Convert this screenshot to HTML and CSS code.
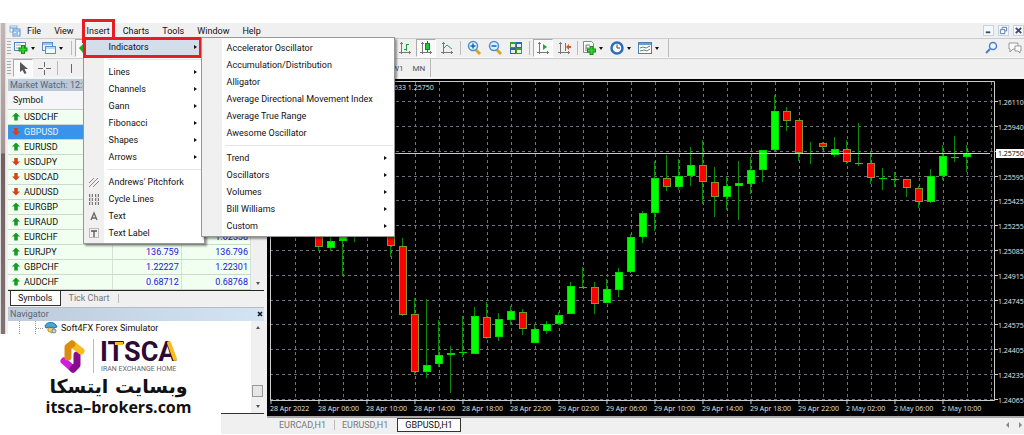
FILE: index.html
```html
<!DOCTYPE html>
<html lang="en">
<head>
<meta charset="utf-8">
<title>GBPUSD,H1</title>
<link rel="stylesheet" href="styles.css">
</head>
<body>
<div class="app">
  <div class="edge"></div>
  <div class="frame">
    <nav class="menubar">
      <svg class="app-icon" viewBox="0 0 12 12"><rect x="1" y="1" width="7" height="6" fill="#fff" stroke="#8db4d8"/><rect x="4" y="4" width="7" height="7" fill="#e3f0fb" stroke="#5b93c7"/><path d="M1 3h7M4 6h7M6 10V8M8 10V7" stroke="#5b93c7"/></svg>
      <button>File</button><button>View</button>
      <div class="menu-anchor">
        <button class="marked">Insert</button>
        <div class="menu menu-insert">
          <button class="item open marked">Indicators</button>
          <hr>
          <button class="item sub">Lines</button>
          <button class="item sub">Channels</button>
          <button class="item sub">Gann</button>
          <button class="item sub">Fibonacci</button>
          <button class="item sub">Shapes</button>
          <button class="item sub">Arrows</button>
          <hr>
          <button class="item"><svg viewBox="0 0 12 12"><path d="M1 7l5-5M1 11L10 2M5 11l6-6" stroke="#888" fill="none"/></svg>Andrews' Pitchfork</button>
          <button class="item"><svg viewBox="0 0 12 12"><path d="M1.500 1v11M4.500 1v11M7.500 1v11M10.500 1v11" stroke="#777" stroke-dasharray="3 1"/><path d="M3 1v11M9 1v11" stroke="#bbb"/></svg>Cycle Lines</button>
          <button class="item"><svg viewBox="0 0 12 12"><path d="M3 10L6 3l3 7M4 8h4" stroke="#666" stroke-width="1.300" fill="none"/></svg>Text</button>
          <button class="item"><svg viewBox="0 0 12 12"><rect x="1.500" y="1.500" width="9" height="9" fill="none" stroke="#888" stroke-dasharray="1 1"/><path d="M3 4h6M6 4v6" stroke="#555" stroke-width="1.300"/></svg>Text Label</button>
        </div>
        <div class="menu menu-indicators">
          <button class="item">Accelerator Oscillator</button>
          <button class="item">Accumulation/Distribution</button>
          <button class="item">Alligator</button>
          <button class="item">Average Directional Movement Index</button>
          <button class="item">Average True Range</button>
          <button class="item">Awesome Oscillator</button>
          <hr>
          <button class="item sub">Trend</button>
          <button class="item sub">Oscillators</button>
          <button class="item sub">Volumes</button>
          <button class="item sub">Bill Williams</button>
          <button class="item sub">Custom</button>
        </div>
      </div>
      <button>Charts</button><button>Tools</button><button>Window</button><button>Help</button>
      <div class="window-buttons">
        <button aria-label="Minimize"><svg viewBox="0 0 10 10"><path d="M2 7h5" stroke="#446" stroke-width="2"/></svg></button>
        <button aria-label="Restore"><svg viewBox="0 0 10 10"><path d="M3.500 3V1.500h5v4H7M1.500 4h5v4.500h-5z" fill="none" stroke="#56729a"/></svg></button>
        <button aria-label="Close"><svg viewBox="0 0 10 10"><path d="M2 2l6 6M8 2L2 8" stroke="#446" stroke-width="2"/></svg></button>
      </div>
    </nav>

    <div class="toolbar">
      <div class="group group-left">
        <i class="grip"></i>
        <button class="tool drop" aria-label="New chart"><svg viewBox="0 0 16 16"><rect x="1.500" y="2.500" width="11" height="8" fill="#fff" stroke="#4e86b8"/><path d="M3 5h5M3 8h4" stroke="#7b9"/><path d="M10 5v9M5.500 9.500h9" stroke="#178a17" stroke-width="4"/><path d="M10 6v7M6.500 9.500h7" stroke="#2fd32f" stroke-width="2"/></svg></button>
        <button class="tool drop" aria-label="Profiles"><svg viewBox="0 0 16 16"><rect x="1.500" y="2.500" width="10" height="8" fill="#e9f3fc" stroke="#5b8fc4"/><path d="M2 4h9" stroke="#5b8fc4"/><rect x="4.500" y="6.500" width="10" height="7" fill="#f4f9ff" stroke="#5b8fc4"/><path d="M5 8h9" stroke="#8db4dc"/></svg></button>
        <i class="sep"></i>
        <button class="tool pressed" aria-label="Market Watch"><svg viewBox="0 0 16 16"><path d="M2 8l4-4v3h4v3H6v3z" fill="#2a2"/></svg></button>
      </div>
      <div class="group group-right">
        <button class="tool" aria-label="Bar chart"><svg viewBox="0 0 16 16"><path d="M4.500 2v12M2 12.500h12" stroke="#777" fill="none"/><path d="M3 3.500h3M12.500 11v3" stroke="#777"/><path d="M9.500 4v7M7 9.500h3M9 4.500h3" stroke="#2a9a3a"/></svg></button>
        <button class="tool pressed" aria-label="Candlesticks"><svg viewBox="0 0 16 16"><path d="M4.500 2v12M2 12.500h12M3 3.500h3M12.500 11v3" stroke="#777"/><path d="M9.500 1v11" stroke="#084"/><rect x="7.500" y="3.500" width="4" height="6" fill="#1fc43a" stroke="#0a8a20"/></svg></button>
        <button class="tool" aria-label="Line chart"><svg viewBox="0 0 16 16"><path d="M4.500 2v12M2 12.500h12M3 3.500h3M12.500 11v3" stroke="#777"/><path d="M4 9l4-4 5 4" stroke="#3a9a4a" fill="none"/></svg></button>
        <i class="sep"></i>
        <button class="tool" aria-label="Zoom in"><svg viewBox="0 0 16 16"><path d="M10 10l4 4" stroke="#d9a520" stroke-width="3"/><circle cx="7" cy="6" r="4.500" fill="#dff0ff" stroke="#4a90d0" stroke-width="1.500"/><path d="M4.500 6h5M7 3.500v5" stroke="#1d5fae" stroke-width="1.500"/></svg></button>
        <button class="tool" aria-label="Zoom out"><svg viewBox="0 0 16 16"><path d="M10 10l4 4" stroke="#d9a520" stroke-width="3"/><circle cx="7" cy="6" r="4.500" fill="#dff0ff" stroke="#4a90d0" stroke-width="1.500"/><path d="M4.500 6h5" stroke="#1d5fae" stroke-width="1.500"/></svg></button>
        <button class="tool" aria-label="Tile windows"><svg viewBox="0 0 16 16"><path d="M2 2h6v6H2zM8 8h6v6H8z" fill="#3f9a2c"/><path d="M8 2h6v6H8zM2 8h6v6H2z" fill="#2c64b4"/><path d="M3 4h4v3H3zM9 4h4v3H9zM3 10h4v3H3zM9 10h4v3H9z" fill="#e5f3e5"/></svg></button>
        <i class="sep"></i>
        <button class="tool pressed" aria-label="Auto scroll"><svg viewBox="0 0 16 16"><path d="M4.500 2v12M2 12.500h12M3 3.500h3M12.500 11v3" stroke="#777"/><path d="M8 4l4 3-4 3z" fill="#1fa93a"/></svg></button>
        <button class="tool" aria-label="Chart shift"><svg viewBox="0 0 16 16"><path d="M4.500 2v12M2 12.500h12M3 3.500h3M12.500 11v3" stroke="#777"/><path d="M9.500 3v8" stroke="#4a7ab0"/><path d="M10 7l3-3v2h2v2h-2v2z" fill="#d9532c"/></svg></button>
        <i class="sep"></i>
        <button class="tool drop" aria-label="Indicators"><svg viewBox="0 0 16 16"><path d="M2.500 1.500h8l2 2v9h-10z" fill="#fff" stroke="#888"/><path d="M5 11V5h4M5 8h3" stroke="#777" fill="none"/><path d="M10.500 6v9M6 10.500h9" stroke="#178a17" stroke-width="4"/><path d="M10.500 7v7M7 10.500h7" stroke="#2fd32f" stroke-width="2"/></svg></button>
        <button class="tool drop" aria-label="Periods"><svg viewBox="0 0 16 16"><circle cx="8" cy="8" r="5.500" fill="#f4f9ff" stroke="#2d6db8" stroke-width="2.500"/><path d="M8 4.500V8h3" stroke="#444" fill="none"/></svg></button>
        <button class="tool drop" aria-label="Templates"><svg viewBox="0 0 16 16"><rect x="1.500" y="2.500" width="13" height="11" fill="#fff" stroke="#4d7fb3"/><path d="M2 4h12" stroke="#6b9bd0" stroke-width="2"/><path d="M3 8l3-1 3 1 4-2M3 11l4-1 3 1 3-2" stroke="#5a8a6a" fill="none"/></svg></button>
      </div>
      <div class="search-tools">
        <button class="tool" aria-label="Search"><svg viewBox="0 0 16 16"><circle cx="9" cy="6" r="3.500" fill="#eef6ff" stroke="#4a80c8" stroke-width="1.500"/><path d="M6 9l-4 4" stroke="#4a80c8" stroke-width="2"/></svg></button>
        <button class="tool" aria-label="Chat"><svg viewBox="0 0 16 16"><path d="M3 3h9v6H7l-3 3V9H3z" fill="#f8f8f8" stroke="#999"/><path d="M9 6h6v5h-1v2l-2-2H9z" fill="#fff" stroke="#999"/></svg></button>
      </div>
    </div>

    <div class="toolbar">
      <div class="group group-left">
        <i class="grip"></i>
        <button class="tool pressed" aria-label="Cursor"><svg viewBox="0 0 16 16"><path d="M5 2v10l2.500-2 2 4 2-1-2-4H13z" fill="#555"/></svg></button>
        <button class="tool" aria-label="Crosshair"><svg viewBox="0 0 16 16"><path d="M8.500 2v5M8.500 10v5M2 8.500h5M10 8.500h5" stroke="#666"/></svg></button>
        <i class="sep"></i>
        <button class="tool" aria-label="Vertical line"><svg viewBox="0 0 16 16"><path d="M8.500 4v9" stroke="#666"/></svg></button>
      </div>
      <div class="group group-periods"><button>W1</button><button>MN</button></div>
    </div>

    <div class="workspace">
      <aside class="side">
        <section class="watch">
          <h2 class="panel-title">Market Watch: 12:3</h2>
          <div class="watch-body">
            <table>
              <thead><tr><th>Symbol</th><th></th><th></th></tr></thead>
              <tbody>
                <tr class="up"><td>USDCHF</td><td></td><td></td></tr>
                <tr class="down selected"><td>GBPUSD</td><td></td><td></td></tr>
                <tr class="up"><td>EURUSD</td><td></td><td></td></tr>
                <tr class="down"><td>USDJPY</td><td></td><td></td></tr>
                <tr class="down"><td>USDCAD</td><td></td><td></td></tr>
                <tr class="down"><td>AUDUSD</td><td></td><td></td></tr>
                <tr class="up"><td>EURGBP</td><td></td><td></td></tr>
                <tr class="up"><td>EURAUD</td><td></td><td></td></tr>
                <tr class="up"><td>EURCHF</td><td></td><td>1.02558</td></tr>
                <tr class="up"><td>EURJPY</td><td>136.759</td><td>136.796</td></tr>
                <tr class="up"><td>GBPCHF</td><td>1.22227</td><td>1.22301</td></tr>
                <tr class="up"><td>AUDCHF</td><td>0.68712</td><td>0.68768</td></tr>
              </tbody>
            </table>
            <div class="scroll"><i class="arrow up-arrow"></i><i class="arrow down-arrow"></i></div>
          </div>
          <div class="panel-tabs"><button class="active">Symbols</button><button>Tick Chart</button><i class="sep"></i></div>
        </section>
        <section class="navigator">
          <h2 class="panel-title nav-title">Navigator<button class="close" aria-label="Close"><svg viewBox="0 0 8 8"><path d="M2 2l4 4M6 2L2 6" stroke="#111" stroke-width="1.500"/></svg></button></h2>
          <div class="nav-body">
            <div class="tree">
              <svg class="branch" viewBox="0 0 36 14"><path d="M11.500 0v14M27.500 0v14M28 7.500h8" stroke="#999" stroke-dasharray="1 1" fill="none"/></svg>
              <svg class="leaf" viewBox="0 0 14 14"><path d="M4 7l5-1 2 3-3 3-4-2z" fill="#f2cf63" stroke="#b9962d"/><path d="M1 5c1-4 8-5 11-1l1 2-4 1-4-1-3 1z" fill="#4aa5dc" stroke="#2573aa"/><circle cx="10" cy="10" r="2" fill="#c9d7dd" stroke="#6b8794"/></svg>
              <span>Soft4FX Forex Simulator</span>
            </div>
            <div class="scroll"><i class="arrow up-arrow"></i><i class="thumb"></i><i class="arrow down-arrow"></i></div>
          </div>
        </section>
      </aside>

      <main class="chart-area">
        <svg id="chart" class="chart" viewBox="267 79 757 337" role="img" aria-label="GBPUSD hourly candles"></svg>
        <div class="chart-tabs">
          <button>EURCAD,H1</button><i class="sep"></i><button>EURUSD,H1</button><button class="active">GBPUSD,H1</button>
          <div class="tab-arrows"><i></i><i class="right"></i></div>
        </div>
      </main>
    </div>
  </div>

  <div class="banner">
    <svg class="logo" viewBox="0 0 124 36">
      <g fill="none" stroke-width="7" stroke-linecap="round" stroke-linejoin="round">
        <path d="M16 31L7 23" stroke="#d01bd8"/><path d="M20 17v10l-4 4" stroke="#870b8c"/>
        <path d="M15 6l9 7" stroke="#f6bd1c"/><path d="M11 19V9l4-3" stroke="#d98c10"/>
      </g>
      <path d="M36.500 1v34" stroke="#bbb"/>
      <text class="wordmark" x="43" y="23">ITSCA</text>
      <path d="M58 5.500h8" stroke="#f6bd1c" stroke-width="3"/>
      <path d="M112 5l6 16" stroke="#f6bd1c" stroke-width="4" stroke-linecap="round"/>
      <text class="tagline" x="44" y="33">IRAN EXCHANGE HOME</text>
    </svg>
    <div class="persian" lang="fa" dir="rtl">وبسایت ایتسکا</div>
    <div class="site">itsca–brokers.com</div>
  </div>
</div>
<script src="chart.js"></script>
</body>
</html>
```

FILE: styles.css
```css
* { box-sizing: border-box; }
body { margin: 0; padding-top: 23px; background: #fff; font-family: Roboto, "Noto Sans", sans-serif; font-size: 9px; color: #111; overflow: hidden; }
button { font: inherit; color: inherit; background: none; border: 0; padding: 0; margin: 0; white-space: nowrap; }
svg { display: block; flex: none; }
.app { position: relative; display: flex; background: #f0f0f0; }
.edge { flex: 0 0 6px; background: linear-gradient(#c4b4b4, #a59494 130px, #716060 131px, #8d7c7c); border-left: 1px solid #ddd; border-right: 1px solid #ddd; }
.frame { flex: 1; min-width: 0; }

.menubar { display: flex; align-items: center; height: 15px; padding-left: 3px; gap: 13px; line-height: 14px; }
.app-icon { width: 12px; height: 12px; margin-right: -7px; }
.menu-anchor { position: relative; }
.menu-anchor > .marked { outline: 3px solid #e81c24; outline-offset: 2px; }
.window-buttons { margin-left: auto; display: flex; gap: 4px; }
.window-buttons button { width: 11px; height: 11px; border: 1px solid #c3d3e6; background: #f5f9fd; }
.window-buttons svg { width: 9px; height: 9px; }

.menu { position: absolute; z-index: 5; background: linear-gradient(90deg, #f0f0f0 20px, #fff 20px); border: 1px solid #979797; box-shadow: 2px 2px 2px #0006; padding: 1px; }
.menu-insert { left: -4px; top: 14px; width: 122px; padding-top: 0; }
.menu-indicators { z-index: 6; left: 114px; top: 13px; width: 194px; padding-top: 2px; }
.item { position: relative; display: flex; align-items: center; width: 100%; height: 17px; padding-left: 24px; }
.item > svg { position: absolute; left: 3px; width: 12px; height: 12px; }
.menu hr { height: 1px; margin: 3px 0 4px 22px; border: 0; background: #e4e4e4; }
.item.sub::after, .item.open::after { content: ""; position: absolute; right: 6px; border: 2px solid transparent; border-left: 3px solid #111; border-right: 0; }
.item.open { width: 115px; background: #d3deea; outline: 3px solid #e81c24; outline-offset: -1px; }
.item.open::after { right: 3px; }

.toolbar { display: flex; height: 20px; border-top: 1px solid #ccc; border-bottom: 1px solid #f8f8f8; }
.group { display: flex; align-items: center; gap: 1px; }
.group-left { flex: 0 0 389px; overflow: hidden; }
.group-right { border-right: 1px solid #bbb; padding-right: 4px; }
.grip { flex: none; width: 4px; height: 14px; margin: 0 1px; background: repeating-linear-gradient(#aaa 0 1px, #f0f0f0 1px 3px); }
.tool { flex: none; display: flex; align-items: center; justify-content: center; width: 20px; height: 18px; }
.tool svg { width: 16px; height: 16px; }
.tool.pressed { background: #f9f9f9; border: 1px solid #fff; border-top-color: #aaa; border-left-color: #aaa; }
.tool.drop { justify-content: flex-start; width: 27px; gap: 2px; }
.tool.drop::after { content: ""; border: 2px solid transparent; border-top: 3px solid #111; border-bottom: 0; }
.sep { flex: none; width: 1px; height: 14px; margin: 0 2px; background: #bbb; }
.search-tools { display: flex; margin-left: auto; gap: 2px; }
.group-periods { gap: 9px; margin-left: -3px; padding-right: 5px; color: #555; font-size: 8px; border-right: 1px solid #bbb; }

.workspace { display: flex; margin-top: 1px; }
.side { flex: 0 0 261px; display: flex; flex-direction: column; padding: 0 3px 0 2px; }
.panel-title { display: flex; align-items: center; height: 12px; margin: 0; padding-left: 2px; font-size: 9px; font-weight: 400; color: #596574; background: #bac8d8; }
.watch-body { display: flex; background: #f0f0f0; border-bottom: 1px solid #222; }
table { flex: 1; border-collapse: collapse; table-layout: fixed; width: 100%; }
th { height: 18px; padding: 0 0 0 5px; text-align: left; font-weight: 400; background: #f6f6f8; border-bottom: 1px solid #ccc; }
th:first-child { width: 104px; }
td { height: 15px; padding: 0 2px 0 0; line-height: 14px; text-align: right; color: #1818d8; background: #f0fff0; border-bottom: 1px solid #cbd8cb; border-right: 1px solid #d5e2d5; }
td:first-child { padding-left: 15px; text-align: left; color: #111; }
.up td:first-child::before, .down td:first-child::before { content: ""; display: inline-block; width: 8px; height: 8px; margin: 0 4px 0 -11px; vertical-align: -1px; background: #159a25; clip-path: polygon(50% 0, 100% 50%, 72% 50%, 72% 100%, 28% 100%, 28% 50%, 0 50%); }
.down td:first-child::before { background: #d3441b; clip-path: polygon(28% 0, 72% 0, 72% 50%, 100% 50%, 50% 100%, 0 50%, 28% 50%); }
.selected td, .selected td:first-child { background: #3993ea; color: #e8f3ff; }
.scroll { flex: 0 0 13px; display: flex; flex-direction: column; align-items: center; padding: 5px 0; background: #f0f0f0; }
.arrow { border: 2px solid transparent; }
.up-arrow { border-bottom: 3px solid #555; border-top: 0; margin-bottom: auto; }
.down-arrow { border-top: 3px solid #555; border-bottom: 0; }
.thumb { width: 11px; height: 12px; margin-bottom: 8px; background: #e6e6e6; border: 1px solid #999; }
.panel-tabs { display: flex; align-items: center; height: 16px; padding: 0 2px 1px; gap: 8px; color: #777; }
.panel-tabs .sep { height: 9px; margin: 0; }
.panel-tabs .active { height: 15px; padding: 0 7px; color: #111; background: #fff; border: 1px solid #333; border-top: 0; }
.navigator { flex: 1; display: flex; flex-direction: column; border-top: 1px solid #bbb; padding-bottom: 20px; }
.nav-title { height: 13px; background: linear-gradient(90deg, #bccbdc, #d3e4f5); }
.close { margin-left: auto; }
.close svg { width: 8px; height: 8px; }
.nav-body { flex: 1; display: flex; background: #fff; border-bottom: 1px solid #333; }
.tree { flex: 1; display: flex; align-items: center; height: 14px; }
.branch { width: 36px; height: 14px; }
.leaf { width: 14px; height: 14px; margin-right: 3px; }

.chart-area { flex: 1; min-width: 0; }
.chart { width: 100%; height: auto; background: #000; font-family: "Open Sans", sans-serif; font-size: 7px; }
.chart text { fill: #e4e4e4; }
.chart .price-now { fill: #000; }
.grid { stroke: #70747a; stroke-dasharray: 3 3; fill: none; }
.axis { stroke: #ccc; fill: none; }
.wick { stroke: #0a8a0a; }
.bull { fill: #00ff00; stroke: #00d800; }
.bear { fill: #ff0000; stroke: #7c9a24; }
.chart-tabs { display: flex; align-items: center; height: 18px; padding: 0 2px 2px 12px; border-top: 2px solid #aaa; color: #777; }
.chart-tabs .sep { height: 10px; margin: 0 7px 0 8px; }
.chart-tabs .active { height: 14px; margin-left: 9px; padding: 0 7px; background: #fff; color: #111; border: 1px solid #333; }
.tab-arrows { display: flex; gap: 10px; margin-left: auto; }
.tab-arrows i { border: 3px solid transparent; border-right-color: #888; border-left: 0; }
.tab-arrows .right { border-left: 3px solid #888; border-right: 0; }

.banner { position: absolute; z-index: 8; left: 0; bottom: 0; width: 221px; height: 100px; padding: 4px 16px 0 0; background: #fff; display: flex; flex-direction: column; align-items: center; color: #111; }
.logo { width: 124px; height: 36px; margin-left: 32px; overflow: visible; }
.wordmark { font: 700 27px Roboto, sans-serif; fill: #2e0a35; }
.tagline { font: 7px Roboto, sans-serif; fill: #666; }
.persian { margin-left: 32px; font: 700 19px/24px "DejaVu Sans", sans-serif; }
.site { margin-left: 32px; font: 700 16px/18px "Open Sans", sans-serif; }
```

FILE: chart.js
```javascript
const svg = document.getElementById('chart');
const NS = 'http://www.w3.org/2000/svg';
function add(tag, attrs, text) {
  const el = document.createElementNS(NS, tag);
  for (const key in attrs) el.setAttribute(key, attrs[key]);
  if (text) el.textContent = text;
  svg.appendChild(el);
}

const prices = ['1.26110', '1.25940', '', '1.25595', '1.25425', '1.25255', '1.25085', '1.24915', '1.24745', '1.24575', '1.24405', '1.24235', '1.24065'];
const rowY = i => Math.round(101.3 + i * 24.78) + 0.5;
let grid = '';
prices.forEach((p, i) => { grid += `M270 ${rowY(i)}H994`; });
for (let x = 295.5; x < 994; x += 24) grid += `M${x} 82V400`;
add('path', { class: 'grid', d: grid });

/* x, wick top, wick bottom, body top, body bottom, direction */
const candles = [
  [319,225,251,228,247,0],[331,236,251,241,248,1],[343,225,276,230,241,1],[355,225,242,230,231,1],
  [391,205,257,211,246,0],[403,238,316,246,315,0],[415,298,374,314,372,0],[427,299,378,365,372,1],
  [439,320,367,355,364,1],[451,346,393,353,355,1],[463,316,357,352,352,1],[475,307,354,316,354,1],
  [487,302,339,317,338,0],[499,313,341,319,337,1],[511,306,325,311,320,1],[523,309,335,312,329,0],
  [535,325,343,329,343,1],[547,321,334,324,331,1],[559,312,325,315,324,1],[571,282,314,286,314,1],
  [583,267,288,287,287,0],[595,282,314,287,304,0],[607,279,303,289,303,1],[619,268,297,272,290,1],
  [631,234,273,237,272,1],[643,211,243,213,237,1],[655,161,231,178,213,1],[667,155,191,178,187,0],
  [679,159,190,176,187,1],[691,147,186,165,176,1],[703,140,204,165,182,0],[715,167,217,182,197,0],
  [727,177,210,186,197,1],[739,161,220,183,186,1],[751,157,194,170,184,1],[763,150,182,150,170,1],
  [775,95,151,111,150,1],[787,107,131,111,121,0],[799,120,161,120,153,0],[811,142,164,153,153,1],
  [823,142,150,143,147,0],[835,137,157,149,155,1],[847,140,164,149,162,0],[859,123,166,163,163,0],
  [871,152,184,163,178,0],[883,168,190,178,178,1],[895,172,187,179,179,1],[907,179,197,179,188,0],
  [919,186,208,188,202,0],[931,169,203,176,202,1],[943,145,180,156,176,1],[955,136,162,157,157,0],
  [967,145,172,153,157,1]
];
candles.forEach(([x, high, low, top, bottom, up]) => {
  add('path', { class: 'wick', d: `M${x - 0.5} ${high}V${low}` });
  add('rect', { class: up ? 'bull' : 'bear', x: x - 3.5, y: top + 0.5, width: 7, height: Math.max(bottom - top - 1, 0.1) });
});

add('path', { class: 'axis', d: 'M270.5 400.5V81.500H994.500V400.500H270.500M990 153.500H270.500' });
prices.forEach((p, i) => {
  add('path', { class: 'axis', d: `M994 ${rowY(i)}h4` });
  if (p) add('text', { x: 998, y: rowY(i) + 3 }, p);
});
add('rect', { x: 996, y: 149, width: 28, height: 9, fill: '#fff' });
add('text', { class: 'price-now', x: 998, y: 156 }, '1.25750');
add('text', { x: 394, y: 90 }, '633 1.25750');

['28 Apr 2022', '28 Apr 06:00', '28 Apr 10:00', '28 Apr 14:00', '28 Apr 18:00', '28 Apr 22:00', '29 Apr 02:00', '29 Apr 06:00', '29 Apr 10:00', '29 Apr 14:00', '29 Apr 18:00', '29 Apr 22:00', '2 May 02:00', '2 May 06:00', '2 May 10:00'].forEach((label, i) => {
  add('path', { class: 'axis', d: `M${271 + i * 48} 400v4` });
  add('text', { x: 270 + i * 48, y: 411 }, label);
});
```
